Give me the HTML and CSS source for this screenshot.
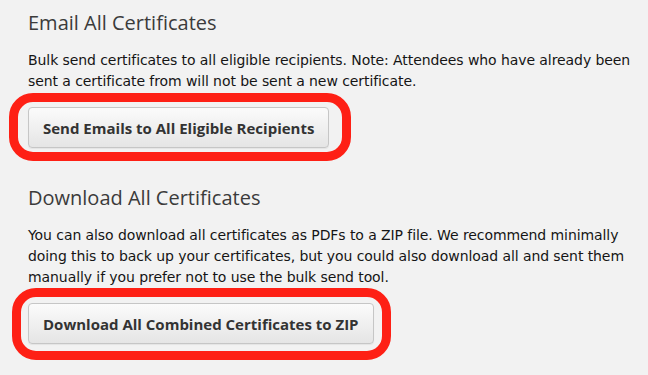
FILE: index.html
```html
<!DOCTYPE html>
<html>
<head>
<meta charset="utf-8">
<link rel="stylesheet" href="styles.css">
</head>
<body>
<div class="page">
  <section class="block">
    <h2 class="title">Email All Certificates</h2>
    <p class="desc">Bulk send certificates to all eligible recipients. Note: Attendees who have already been sent a certificate from will not be sent a new certificate.</p>
    <div class="action">
      <button class="btn">Send Emails to All Eligible Recipients</button>
      <span class="mark mark-one"></span>
    </div>
  </section>
  <section class="block block-second">
    <h2 class="title">Download All Certificates</h2>
    <p class="desc">You can also download all certificates as PDFs to a ZIP file. We recommend minimally doing this to back up your certificates, but you could also download all and sent them manually if you prefer not to use the bulk send tool.</p>
    <div class="action">
      <button class="btn">Download All Combined Certificates to ZIP</button>
      <span class="mark mark-two"></span>
    </div>
  </section>
</div>
</body>
</html>
```
FILE: styles.css
```css
html, body {
  margin: 0;
  padding: 0;
  background: #f2f2f2;
}
body {
  font-family: "DejaVu Sans", "Liberation Sans", sans-serif;
  width: 648px;
  height: 375px;
  overflow: hidden;
}
.page {
  padding: 11px 0 0 28px;
}
.block {
  display: flex;
  flex-direction: column;
  align-items: flex-start;
}
.block-second {
  margin-top: 38px;
}
.title {
  margin: 0;
  font-family: "Open Sans", "DejaVu Sans", sans-serif;
  font-size: 20px;
  line-height: 24px;
  font-weight: normal;
  color: #3b3b3b;
}
.desc {
  margin: 15px 0 15px 0;
  width: 606px;
  font-size: 14px;
  line-height: 21px;
  letter-spacing: -0.08px;
  color: #151515;
}
.action {
  position: relative;
  display: inline-block;
}
.btn {
  display: block;
  height: 41px;
  padding: 0 14px;
  font-family: "Open Sans", "DejaVu Sans", sans-serif;
  font-size: 15px;
  font-weight: bold;
  color: #333;
  background: linear-gradient(#fbfbfb, #e5e5e5);
  border: 1px solid #c6c6c6;
  border-radius: 4px;
  box-shadow: 0 1px 1px rgba(0,0,0,0.06);
}
.mark {
  position: absolute;
  border: 9px solid #fe2015;
  border-radius: 24px;
  pointer-events: none;
}
.mark-one {
  left: -19px;
  right: -22px;
  top: -14px;
  bottom: -13px;
}
.mark-two {
  left: -16px;
  right: -17px;
  top: -15px;
  bottom: -16px;
}
```
